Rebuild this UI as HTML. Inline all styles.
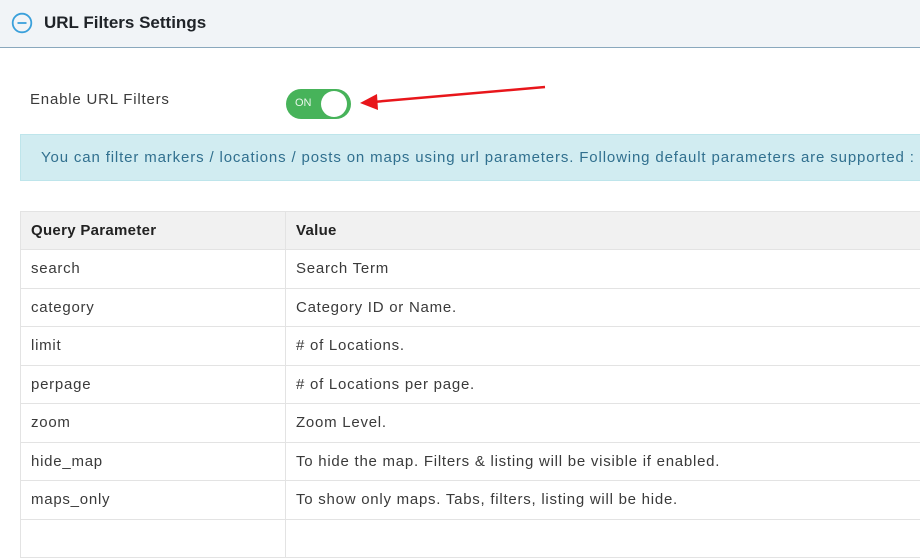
<!DOCTYPE html>
<html><head><style>
*{margin:0;padding:0;box-sizing:border-box}
body{width:920px;height:520px;overflow:hidden;background:#fff;font-family:"Liberation Sans",sans-serif;color:#333;position:relative}
.hdr{position:absolute;left:0;top:0;width:920px;height:48px;background:#f1f4f7;border-bottom:1px solid #8aa8bd}
.hdr h1{position:absolute;left:44px;top:13px;font-size:17px;font-weight:bold;color:#1f2328;letter-spacing:0}
.lbl{position:absolute;left:30px;top:91px;font-size:15px;color:#3a3a3a;letter-spacing:0.8px}
.tog{position:absolute;left:286px;top:89px;width:65px;height:30px;border-radius:15px;background:#47b35a}
.tog span{position:absolute;left:9px;top:8px;font-size:11px;color:#e8f6ea}
.tog i{position:absolute;left:35px;top:2px;width:26px;height:26px;border-radius:50%;background:#fff}
.info{position:absolute;left:20px;top:134px;width:910px;height:47px;background:#d1ecf1;border:1px solid #bee5eb;font-size:15px;color:#31708f;padding:14px 0 0 20px;letter-spacing:0.86px;white-space:nowrap}
table{position:absolute;left:20px;top:211px;width:910px;border-collapse:collapse;font-size:15px;letter-spacing:0.75px}
td,th{border:1px solid #e3e3e3;height:38.5px;padding:0 10px;text-align:left;color:#3a3a3a;font-weight:normal}
th{background:#f1f1f1;font-weight:bold;color:#222;letter-spacing:0.3px;height:38px}
td:first-child,th:first-child{width:265px}
</style></head><body>
<div class="hdr">
<svg style="position:absolute;left:11px;top:12px" width="22" height="22"><circle cx="11" cy="11" r="9.3" fill="none" stroke="#3aa0db" stroke-width="1.8"/><line x1="6.5" y1="11" x2="15.5" y2="11" stroke="#3aa0db" stroke-width="1.8"/></svg>
<h1>URL Filters Settings</h1></div>
<div class="lbl">Enable URL Filters</div>
<div class="tog"><span>ON</span><i></i></div>
<svg style="position:absolute;left:355px;top:80px" width="200" height="35"><line x1="190" y1="7" x2="18" y2="22" stroke="#e8161b" stroke-width="2.5"/><polygon points="5,23 22,14 23,30" fill="#e8161b"/></svg>
<div class="info">You can filter markers / locations / posts on maps using url parameters. Following default parameters are supported :</div>
<table>
<tr><th>Query Parameter</th><th>Value</th></tr>
<tr><td>search</td><td>Search Term</td></tr>
<tr><td>category</td><td>Category ID or Name.</td></tr>
<tr><td>limit</td><td># of Locations.</td></tr>
<tr><td>perpage</td><td># of Locations per page.</td></tr>
<tr><td>zoom</td><td>Zoom Level.</td></tr>
<tr><td>hide_map</td><td>To hide the map. Filters &amp; listing will be visible if enabled.</td></tr>
<tr><td>maps_only</td><td>To show only maps. Tabs, filters, listing will be hide.</td></tr>
<tr><td>&nbsp;</td><td>&nbsp;</td></tr>
</table>
</body></html>
